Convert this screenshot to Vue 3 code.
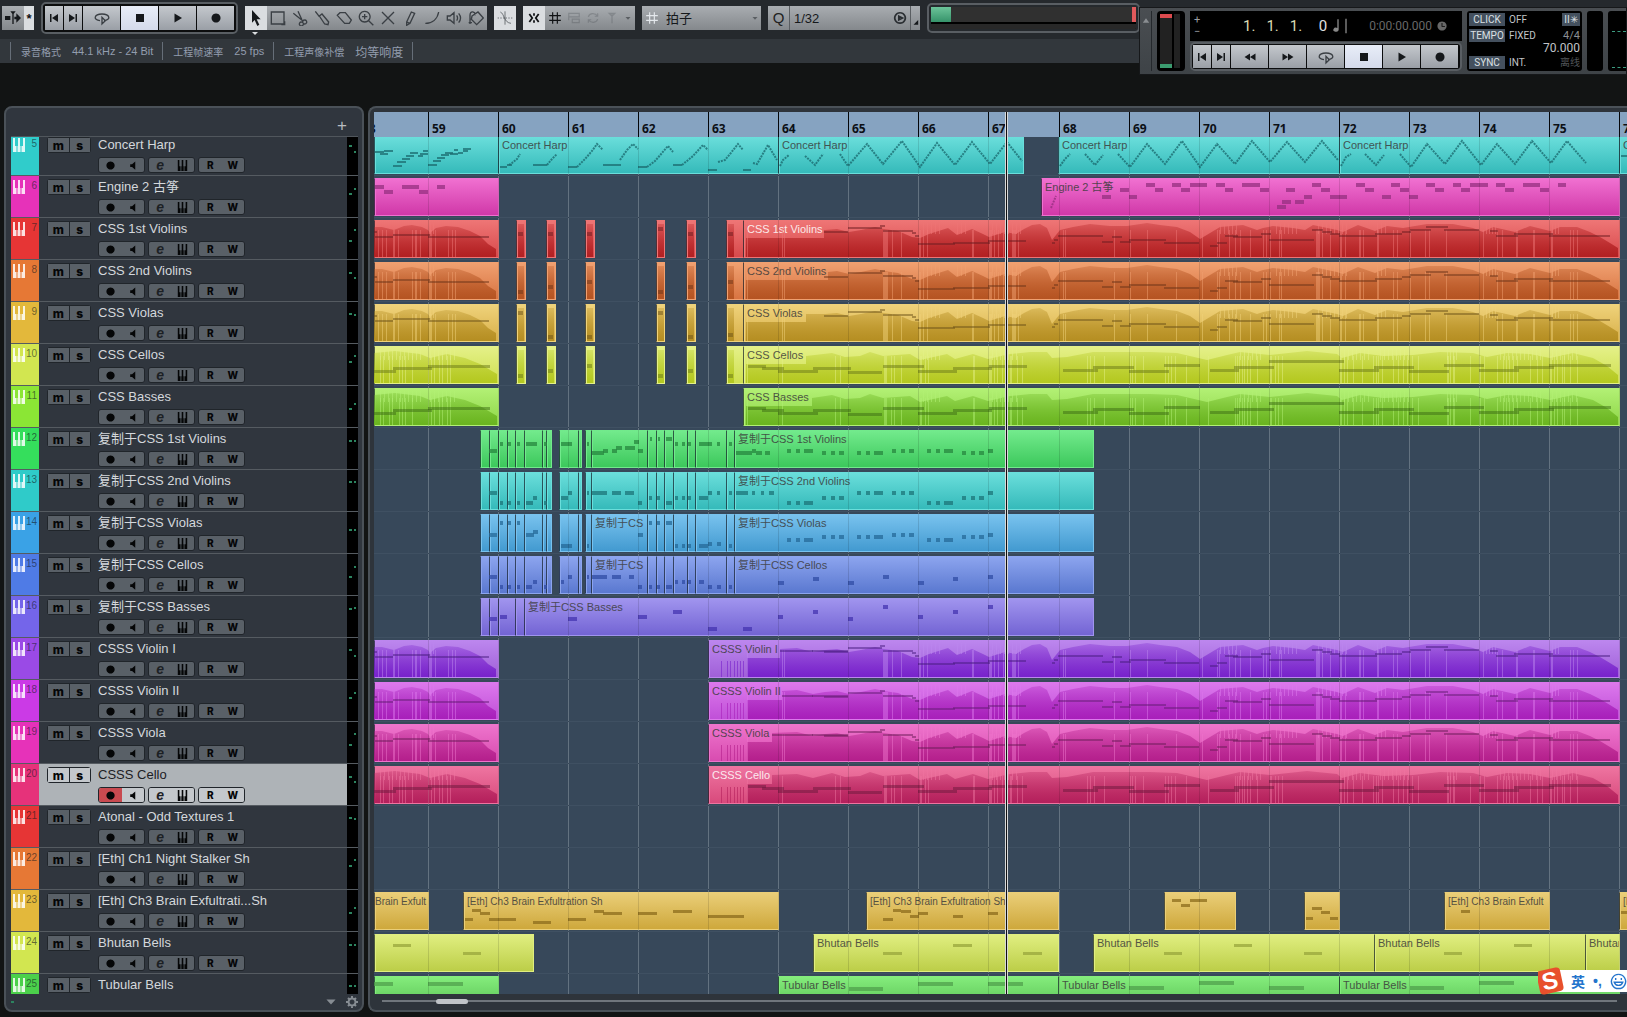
<template>
  <div class="daw">
    <header class="toolbar">
      <div class="group">
        <button class="btn w22" aria-label="Auto-scroll"><svg viewBox="0 0 24 24"><path d="M0 9h8v6H0zM11 3h2v18h-2zM14 10h3V5l7 7-7 7v-5h-3zM8 2h8l-4 5z" /></svg></button>
        <button class="btn w10 lit" aria-label="Suspend auto-scroll"><b>*</b></button>
      </div>
      <div class="transport small">
        <button v-for="t in mainTransport" :key="t" class="btn" :class="[t, { lit: t === 'stop' }]" :aria-label="t">
          <svg viewBox="0 0 24 24" :class="{ line: t === 'cycle' }"><path :d="icons[t]" /></svg>
        </button>
      </div>
      <div class="group tools">
        <button v-for="(t, i) in tools" :key="t" class="btn w22" :class="{ lit: i === 0 }" :aria-label="t">
          <svg viewBox="0 0 24 24" :class="{ line: i > 0 }"><path :d="icons[t]" /></svg>
        </button>
      </div>
      <div class="group">
        <button class="btn w22 lit" aria-label="Snap to zero crossing"><svg class="line thin" viewBox="0 0 24 24"><path d="M12 2v20M1 12h2M5 12h2M9 12h2M13 12h2M17 12h2M21 12h2M5 3c6 2 5 16 16 17" /></svg></button>
      </div>
      <div class="group snap">
        <button class="btn w22 lit" aria-label="Snap"><svg class="line bold" viewBox="0 0 24 24"><path d="M4 5l5 7-5 7M20 5l-5 7 5 7M12 4v4M12 16v4" /></svg></button>
        <button class="btn" aria-label="Grid"><svg class="line dark" viewBox="0 0 24 24"><path :d="icons.grid" /></svg></button>
        <button class="btn dim" aria-label="Events"><svg class="line" viewBox="0 0 24 24"><path d="M3 4h18v6H3zM9 14h12v6H9zM3 10v6" /></svg></button>
        <button class="btn dim" aria-label="Shuffle"><svg class="line" viewBox="0 0 24 24"><path d="M4 10c2-7 12-7 16-1M20 14c-2 7-12 7-16 1M20 4v5h-5M4 20v-5h5" /></svg></button>
        <button class="btn dim" aria-label="Cursor"><svg class="line" viewBox="0 0 24 24"><path d="M12 4v17M7 4h10l-5 5z" /></svg></button>
        <button class="btn w14" aria-label="Snap type"><svg viewBox="0 0 24 24"><path d="M2 8h20L12 19z" /></svg></button>
      </div>
      <label class="group field beat">
        <svg class="line white" viewBox="0 0 24 24"><path :d="icons.grid" /></svg>
        <select aria-label="网格类型"><option>拍子</option></select>
        <svg class="arrow" viewBox="0 0 24 24"><path d="M2 8h20L12 19z" /></svg>
      </label>
      <div class="group field quant">
        <span class="q">Q</span>
        <select aria-label="Quantize preset"><option>1/32</option></select>
        <svg class="line bold" viewBox="0 0 24 24"><path d="M12 3a9 9 0 1 0 .1 0M10 9l6 3-6 3z" /></svg>
        <button class="btn w10" aria-label="Quantize panel"><svg viewBox="0 0 10 24"><path d="M9 15v7H2z" /></svg></button>
      </div>
      <div class="load"><i class="ok"></i><i class="clip-led"></i></div>
    </header>

    <section class="infoline">
      <div><small>录音格式</small><span>44.1 kHz - 24 Bit</span></div>
      <div><small>工程帧速率</small><span>25 fps</span></div>
      <div><small>工程声像补偿</small><span class="cjk">均等响度</span></div>
    </section>

    <!-- floating transport panel -->
    <aside class="panel-transport">
      <div class="handle"><svg viewBox="0 0 24 24"><path d="M12 4l11 16H1z" /></svg></div>
      <div class="io"><i></i><i></i></div>
      <div class="center">
        <div class="time">
          <span class="pm"><i>+</i><i>−</i></span>
          <span class="pos"><em>1.</em><em>1.</em><em>1.</em><em class="tick">0</em></span>
          <svg class="note" viewBox="0 0 24 24"><path d="M8 2h2v16a4 3 0 1 1-2-3zM20 1h2v22h-2z" /></svg>
          <span class="clock">0:00:00.000</span>
          <svg class="watch" viewBox="0 0 24 24"><path fill-rule="evenodd" d="M12 1a11 11 0 1 0 .1 0zM11 5v9h8v-2h-6V5z" /></svg>
        </div>
        <div class="transport">
          <button v-for="t in panelTransport" :key="t" class="btn" :class="[t, { lit: t === 'stop' }]" :aria-label="t">
            <svg viewBox="0 0 24 24" :class="{ line: t === 'cycle' }"><path :d="icons[t]" /></svg>
          </button>
        </div>
      </div>
      <div class="status">
        <p><b>CLICK</b><span>OFF</span><b class="pre">II✳</b></p>
        <p class="tempo"><b>TEMPO</b><span>FIXED</span><em>4/4</em></p>
        <p class="bpm">70.000</p>
        <p><b>SYNC</b><span>INT.</span><small>离线</small></p>
      </div>
      <div class="slot"></div>
      <div class="slot last"><i></i><i></i></div>
    </aside>

    <main class="workspace">
      <section class="list">
        <div class="list-head"><button aria-label="Add track">+</button></div>
        <div class="rows">
          <article v-for="t in tracks" :key="t.id" class="row" :class="{ selected: t.id === 20 }" :style="{ '--c': t.color }">
            <div class="strip">
              <svg viewBox="0 0 12 14"><path :d="icons.keys" /></svg>
              <span>{{ t.id }}</span>
            </div>
            <div class="ms"><button>m</button><button>s</button></div>
            <div class="info">
              <h3>{{ t.name }}</h3>
              <div class="ctl">
                <div>
                  <button class="rec" aria-label="Record enable"><svg viewBox="0 0 24 24"><path :d="icons.record" /></svg></button>
                  <button aria-label="Monitor"><svg viewBox="0 0 24 24"><path d="M7 9h4l7-6v18l-7-6H7z" /></svg></button>
                </div>
                <div>
                  <button class="e" aria-label="Edit channel">e</button>
                  <button aria-label="Instrument"><svg viewBox="0 0 12 14"><path :d="icons.keys" /></svg></button>
                </div>
                <div><button>R</button><button>W</button></div>
              </div>
            </div>
            <div class="meter"><i :class="'m' + (t.id % 4)"></i><i :class="'m' + (t.id % 3)"></i></div>
          </article>
        </div>
        <div class="list-foot">
          <i></i>
          <svg viewBox="0 0 24 24"><path d="M1 6h22L12 18z" /></svg>
          <svg class="line gear" viewBox="0 0 24 24"><path d="M12 5a7 7 0 1 0 .1 0M12 0v5M12 19v5M0 12h5M19 12h5M4 4l3 3M17 17l3 3M4 20l3-3M17 7l3-3" /></svg>
        </div>
      </section>

      <section class="arrange">
        <div class="canvas">
          <div class="ruler">
            <span v-for="b in bars" :key="b" class="bar" :style="{ left: barX(b) + 'px' }">{{ b }}</span>
          </div>
          <div class="lanes">
            <i v-for="b in bars" :key="b" class="grid" :style="{ left: barX(b) + 'px' }"></i>
            <div
              v-for="t in tracks"
              :key="t.id"
              class="lane"
              :class="{ tight: t.id === 23 }"
              :style="{ '--hi': t.hi, '--lo': t.lo, '--note': t.note }"
            >
              <div
                v-for="(c, i) in t.clips"
                :key="i"
                class="clip"
                :style="{ left: c[0] - origin + 'px', width: c[1] - c[0] + 1 + 'px' }"
              >
                <span v-if="c[2]" :class="{ pale: t.id === 7 || t.id === 20, flush: c[3] }">{{ c[2] }}</span>
              </div>
              <svg v-if="t.notes" class="art" aria-hidden="true">
                <defs v-if="t.deep">
                  <linearGradient :id="'env' + t.id" x1="0" y1="0" x2="0" y2="1">
                    <stop offset="0" :stop-color="t.deep" stop-opacity=".3" />
                    <stop offset="1" :stop-color="t.deep" />
                  </linearGradient>
                </defs>
                <g :transform="`translate(${-origin} 0)`">
                  <polygon v-for="(p, i) in t.envelopes" :key="'p' + i" :points="p" :fill="`url(#env${t.id})`" />
                  <path v-if="t.comb" :d="t.comb" :stroke="t.hi" stroke-opacity=".55" />
                  <path v-if="t.stripes" :d="t.stripes" :stroke="t.hi" stroke-opacity=".5" />
                  <path v-if="t.attack" :d="t.attack" :stroke="t.deep" stroke-opacity=".6" />
                  <rect
                    v-for="(n, i) in t.notes"
                    :key="'n' + i"
                    :x="n[0]"
                    :y="n[2]"
                    :width="n[1] - n[0]"
                    :height="n[3] || t.thick"
                    :class="{ soft: t.deep }"
                  />
                  <polyline v-for="(l, i) in t.runs" :key="'l' + i" :points="l" />
                </g>
              </svg>
            </div>
            <i v-for="b in bars" :key="'o' + b" class="grid over" :style="{ left: barX(b) + 'px' }"></i>
          </div>
          <i class="playhead"></i>
        </div>
        <div class="hscroll"><i></i></div>
      </section>
    </main>

    <!-- input method bar -->
    <div class="ime">
      <b>S</b>
      <div><span>英</span><span>•,</span>
        <svg class="line" viewBox="0 0 24 24"><path d="M12 2a10 10 0 1 0 .1 0M8 7v3M16 7v3M6 13c2 6 10 6 12 0z" /></svg>
      </div>
    </div>
  </div>
</template>

<script setup>
const origin = 374
const bars = Array.from({ length: 19 }, (_, i) => i + 58)
const barX = (b) => Math.round(124 + (b - 60) * 70.07)

const mainTransport = ['prev', 'next', 'cycle', 'stop', 'play', 'record']
const panelTransport = ['prev', 'next', 'rewind', 'forward', 'cycle', 'stop', 'play', 'record']
const tools = ['select', 'range', 'split', 'glue', 'erase', 'zoom', 'mute', 'draw', 'line', 'listen', 'color']

const icons = {
  prev: 'M4 4h3v16H4zM20 4v16L8 12z',
  next: 'M17 4h3v16h-3zM4 4v16l12-8z',
  rewind: 'M12 5v14L1 12zM23 5v14l-11-7z',
  forward: 'M12 5v14l11-7zM1 5v14l11-7z',
  cycle: 'M9 16C-2 15 0 6 12 6s14 9 3 10M12 11v10l5-5z',
  stop: 'M4 4h16v16H4z',
  play: 'M5 3v18l15-9z',
  record: 'M12 3a9 9 0 1 0 .1 0z',
  select: 'M6 0v19l4-4 4 9 3-2-4-8h6z',
  range: 'M2 3h19v18H2zM22 17v5h-5',
  split: 'M2 5l14 11M9 2l6 13M19 15a3 3 0 1 0 .1 0M14 18a3 3 0 1 0 .1 0',
  glue: 'M2 2l6 8M8 9l4-3 10 12-1 4-5-1z',
  erase: 'M2 8l4-4h8l9 11-3 5h-7z',
  zoom: 'M10 2a8 8 0 1 0 .1 0M10 6v8M6 10h8M16 16l7 7',
  mute: 'M3 3l18 18M21 3L3 21',
  draw: 'M7 18L14 3l5 2-7 15-5 3zM7 18l5 2',
  line: 'M2 20C12 20 20 14 22 3',
  listen: 'M2 9v6h4l6 5V4L6 9zM16 8c2 3 2 5 0 8M19 5c4 5 4 9 0 14',
  color: 'M6 9l9-6 8 9-10 10-8-8zM3 21V8c0-8 8-6 8 0M1 19h5',
  grid: 'M8 2v20M16 2v20M2 8h20M2 16h20',
  keys: 'M0 0h2v8h1.5v6H0zM4.5 8H5V0h2v8h.5v6h-3zM10 0h2v14H8.5V8H10z'
}

/* Controller curves: "x:y" pairs inside the clip */
const parse = (s) => s.split(' ').map((p) => p.split(':').map(Number))
const tail = '825:10 837:9 849:12 861:10 875:7 884:9 898:11 912:17 920:18 929:14 948:8 957:15 972:9 983:14 989:17 1005:12 1016:14 1024:9 1032:5 1040:4 1047:8 1052:20 1060:10 1073:7 1090:4 1110:6 1127:6 1147:3 1160:5 1177:7 1190:12 1200:19 1210:13 1220:7 1243:5 1257:10 1263:8 1273:6 1293:8 1305:10 1313:5 1337:10 1343:12 1358:5 1375:11 1387:6 1403:8 1427:4 1453:4 1473:8 1483:12 1493:7 1515:12 1530:6 1550:11 1560:7 1577:7 1590:12 1600:17 1610:23 1618:28'
const lowTail = '832:7 845:11 860:10 870:6 883:10 910:8 920:14 947:8 955:13 973:8 988:13 1010:8 1030:6 1047:6 1052:12 1067:11 1093:6 1113:6 1150:6 1177:7 1207:14 1227:9 1240:6 1270:9 1307:5 1337:8 1342:12 1360:7 1383:10 1413:9 1440:6 1473:7 1487:11 1507:7 1530:8 1550:12 1573:7 1593:12 1607:20 1618:29'
const head = parse('374:7 382:7 394:10 404:6 412:5 422:7 428:10 430:13 436:8 446:6 458:7 470:11 480:16 488:24 496:29')
const lowHead = parse('374:7 395:5 420:8 430:12 447:8 465:12 480:18 497:28')

const closed = (pts) => {
  const all = [[pts[0][0], 37], ...pts, [pts[pts.length - 1][0], 37]]
  return all.map((p) => p.join(',')).join(' ')
}
const vlines = (xs, y1, y2) => xs.map((x) => `M${x + 0.5} ${y1}V${y2}`).join('')
const shift = (notes, dy) => notes.map(([a, b, y]) => [a, b, y + dy])

const highStripes = [378, 382, 386, 393, 394, 398, 412, 415, 416, 420, 429, 430, 431, 435, 448, 452, 455, 747, 782, 784, 883, 884, 885, 886, 887, 892, 901, 919, 920, 923, 927, 972, 973, 989, 990, 991, 994, 998, 1003, 1012, 1013, 1014, 1015, 1018, 1063, 1065, 1114, 1130, 1147, 1176, 1202, 1217, 1219, 1229, 1235, 1240, 1250, 1263, 1266, 1270, 1279, 1281, 1316, 1317, 1318, 1319, 1322, 1330, 1340, 1341, 1345, 1359, 1360, 1363, 1377, 1378, 1393, 1397, 1410, 1425, 1429, 1446, 1483, 1497, 1502, 1516, 1517, 1533, 1534, 1551, 1552, 1570, 1573, 1577]
const lowStripes = [380, 383, 389, 392, 399, 402, 405, 412, 428, 431, 434, 439, 442, 447, 450, 747, 782, 835, 840, 884, 885, 886, 891, 894, 901, 920, 921, 925, 928, 973, 974, 989, 990, 991, 994, 997, 1002, 1010, 1011, 1017, 1022, 1087, 1090, 1094, 1104, 1130, 1132, 1135, 1143, 1165, 1168, 1171, 1175, 1186, 1208, 1235, 1237, 1239, 1242, 1244, 1247, 1250, 1257, 1270, 1271, 1275, 1278, 1282, 1340, 1341, 1344, 1347, 1353, 1362, 1373, 1376, 1378, 1382, 1393, 1398, 1403, 1407, 1412, 1418, 1447, 1448, 1450, 1453, 1454, 1470, 1479, 1480, 1484, 1497, 1503, 1506, 1509, 1513, 1517, 1530, 1537, 1542, 1550, 1551, 1554, 1557, 1562, 1564, 1570, 1577]

const span = (a, b, step) => Array.from({ length: Math.floor((b - a) / step) }, (_, i) => a + i * step)
const highComb = [...span(430, 438, 3), ...span(923, 945, 4), ...span(957, 972, 4), ...span(992, 1026, 4), ...span(1220, 1240, 4), ...span(1276, 1300, 4), ...span(1318, 1352, 4), ...span(1377, 1390, 4), ...span(1486, 1500, 3), ...span(1552, 1562, 3)]
const lowComb = [...span(380, 425, 4), ...span(430, 460, 4), ...span(923, 945, 4), ...span(992, 1020, 4), ...span(1240, 1266, 4), ...span(1340, 1375, 4), ...span(1380, 1415, 4), ...span(1447, 1460, 3), ...span(1500, 1545, 4), ...span(1552, 1580, 4)]

const highNotes = [[374, 377, 11], [375, 393, 16], [393, 430, 14], [428, 489, 16], [824, 848, 11], [848, 882, 7], [880, 885, 5], [883, 913, 10], [912, 916, 12], [915, 919, 15], [918, 955, 23], [953, 990, 22], [988, 1026, 20], [1052, 1055, 22], [1054, 1058, 19], [1058, 1103, 15], [1102, 1113, 21], [1112, 1122, 16], [1120, 1131, 21], [1129, 1166, 19], [1164, 1199, 22], [1210, 1218, 25], [1217, 1227, 22], [1225, 1238, 15], [1233, 1262, 16], [1261, 1271, 13], [1269, 1314, 19], [1312, 1323, 9], [1322, 1332, 11], [1330, 1340, 13], [1339, 1377, 15], [1375, 1402, 13], [1402, 1411, 11], [1410, 1431, 9], [1426, 1448, 6], [1444, 1479, 9], [1490, 1498, 10], [1496, 1518, 15], [1514, 1553, 13], [1549, 1610, 15]]
const lowNotes = [[374, 396, 24], [393, 432, 21], [428, 490, 19], [748, 766, 19], [762, 784, 21], [778, 818, 24], [813, 851, 21], [848, 882, 25], [883, 924, 19], [918, 957, 24], [953, 992, 21], [989, 1027, 19], [1063, 1098, 23], [1093, 1134, 20], [1129, 1169, 24], [1164, 1200, 18], [1210, 1239, 23], [1234, 1274, 20], [1269, 1344, 14], [1339, 1379, 23], [1374, 1414, 20], [1409, 1449, 24], [1444, 1484, 18], [1479, 1519, 23], [1514, 1554, 20], [1549, 1611, 18]]

const stabX = [[516, 525], [546, 555], [585, 594], [656, 664], [686, 695], [726, 743]]
const stabNotes = (ys) => ys.map((y, i) => [stabX[i][0] + 2, stabX[i][0] + 7, y, 4])

function strings(label, from, { low = false, dy = 0, stabs = null, labelEnd }) {
  const body = parse(low ? lowTail : tail)
  const lead = from === 708
    ? [[747, 18], [labelEnd, 18], [labelEnd, 9], [797, 8], [813, 12]]
    : [[746, 18], [labelEnd, 18], [labelEnd, 10]]
  const pts = [...lead, ...body.filter((p) => p[0] > labelEnd)]
  const notes = shift(low ? lowNotes : highNotes, dy)
  const extra = from === 708 && !low ? shift([[labelEnd, 813, 10], [812, 848, 10]], dy) : []
  const envelopes = [closed(low ? lowHead : head), closed(pts)]
  if (stabs) {
    stabX.forEach(([a]) => envelopes.push(`${a + 2},37 ${a + 2},4 ${a + 8},4 ${a + 8},37`))
  }
  return {
    clips: [[374, 498], ...(stabs ? stabX : []), [from, 1619, label]],
    notes: [...notes, ...extra, ...(stabs ? stabNotes(stabs) : [])],
    thick: low ? 3 : 2,
    envelopes,
    stripes: vlines(low ? lowStripes : highStripes, 10, 37),
    comb: vlines(low ? lowComb : highComb, 3, 14),
    attack: from === 708 ? vlines([721, 727, 730, 734, 737, 740, 743], 21, 37) : ''
  }
}

const cuts = [498, 507, 515, 524, 542, 546, 551]
const cuts2 = [585, 591, 647, 656, 664, 673, 687, 695, 726, 734]
const pairs = (xs) => xs.slice(1).map((x, i) => [xs[i], x])

function copied(label, notes, cut) {
  const mid = pairs(cuts2)
  if (cut) mid[1] = [591, 647, '复制于CS']
  return {
    clips: [[480, 489], [489, 498], ...pairs(cuts), [559, 578], [578, 581], ...mid, [734, 1093, label]],
    notes,
    thick: 4
  }
}
// staccato phrase in half bars, one pitch for each
const phrase = (ys) => {
  const out = ys.flatMap((y, i) => {
    const x = 787 + i * 35
    return [[x, x + 4, y], [x + 9, x + 13, y], [x + 17, x + (i % 2 ? 22 : 26), y]]
  })
  return [...out, [988, 993, 19]]
}
const at = (xs, y) => xs.map((x) => [x, x + 3, y])

const green = [[489, 497, 19], ...at([500, 508, 517, 544], 12), [526, 537, 12], [561, 572, 12], [587, 589, 12], [592, 604, 21], [603, 608, 19], [612, 617, 19], [616, 622, 16], [625, 635, 16], [634, 639, 10], [638, 643, 19], [650, 652, 7], [658, 660, 7], [666, 672, 7], ...at([675, 682, 688, 717, 729], 12), [699, 712, 12], [736, 752, 21], [752, 756, 19], [756, 762, 21], [765, 770, 21], ...phrase([19, 21, 21, 19, 19, 21])]
const teal = [[489, 497, 19], ...at([500, 508, 517, 544], 29), [526, 533, 29], [533, 537, 24], [561, 568, 24], [568, 572, 19], [587, 589, 19], [592, 607, 19], [612, 621, 19], [625, 634, 19], [638, 642, 29], ...at([649, 657, 675, 682, 688], 24), [666, 672, 29], [699, 708, 24], [708, 712, 19], ...at([717, 729, 752, 761], 19), [736, 748, 19], [769, 774, 19], ...phrase([29, 24, 19, 19, 29, 24])]
const blue = [[489, 497, 19], ...at([500, 508, 517, 649, 657], 7), [526, 534, 19], [533, 538, 16], [561, 572, 30], [587, 589, 30], [638, 643, 19], [666, 672, 7], ...at([675, 682, 688, 729], 30), [699, 708, 30], [708, 712, 28], [717, 721, 28], ...phrase([24, 21, 21, 19, 24, 21])]
const indigo = [[489, 497, 19], ...at([500, 508, 517, 544, 649, 657, 729], 29), [526, 532, 29], [533, 537, 24], [561, 564, 24], [568, 572, 19], [587, 589, 19], [592, 607, 19], [612, 621, 19], [629, 634, 19], [638, 642, 29], [666, 672, 29], ...at([675, 682, 688], 24), [699, 704, 24], [708, 712, 29], [717, 721, 29], [778, 784, 25], [813, 819, 21], [848, 854, 25], [883, 889, 19], [918, 924, 25], [953, 958, 21], [988, 993, 19]]
const violet = [[489, 497, 19], [500, 507, 17], [568, 577, 19], [638, 647, 17], [673, 682, 12], [708, 717, 29], [743, 752, 29], [778, 783, 17], [813, 818, 12], [848, 853, 19], [883, 888, 7], [918, 923, 17], [953, 958, 12], [988, 993, 7]]

const harpNotes = [[375, 384, 15], [380, 388, 17], [384, 393, 14], [393, 402, 29], [397, 406, 25], [402, 410, 22], [406, 414, 19], [410, 418, 16], [418, 423, 19], [420, 428, 17], [423, 428, 14], [428, 437, 28], [433, 441, 24], [437, 445, 21], [441, 449, 18], [445, 453, 16], [450, 458, 17], [454, 458, 13], [458, 463, 16], [463, 471, 12], [463, 468, 14], [500, 507, 30], [507, 512, 28], [533, 547, 28], [568, 577, 30], [612, 621, 28], [603, 612, 28], [638, 647, 30], [673, 682, 28], [708, 717, 33], [743, 751, 33], [1621, 1627, 19]]
const harpRuns = [
  '509,29 512,27 517,23 520,18', '547,29 552,23 557,18',
  '577,31 585,23 592,15 597,8 603,14', '620,24 627,14 633,8 638,13',
  '647,31 655,25 662,17 668,10 673,16', '682,29 693,20 703,9 708,14',
  '718,26 725,24 730,18 738,8 743,14', '753,27 757,28 768,9 777,24',
  '780,30 783,24 789,19', '805,20 815,29 823,18',
  '840,18 848,30 867,8 883,28 902,5 920,31 937,7 955,29 972,6 990,28 1007,6 1022,25',
  '1060,30 1065,23 1070,18', '1085,18 1095,29 1103,19',
  '1118,18 1130,31 1147,8 1165,28 1182,5 1200,31 1217,8 1235,28 1252,5 1270,26 1287,6 1305,26 1322,5 1338,24',
  '1341,30 1346,21 1351,18', '1365,18 1376,29 1384,19',
  '1400,18 1411,31 1427,8 1445,28 1462,5 1481,29 1497,8 1515,28 1532,5 1551,27 1567,5 1586,27'
]
const zheng = [[375, 384, 7], [384, 393, 12], [402, 419, 7], [419, 428, 12], [437, 445, 7], [1102, 1111, 17], [1120, 1129, 10], [1129, 1137, 17], [1146, 1155, 5], [1155, 1163, 10], [1172, 1181, 5], [1181, 1190, 10], [1190, 1207, 5], [1216, 1225, 5], [1225, 1233, 10], [1242, 1260, 5], [1260, 1269, 10], [1286, 1295, 10], [1277, 1286, 27], [1282, 1291, 22], [1295, 1304, 22], [1304, 1312, 17], [1312, 1321, 5], [1321, 1330, 10], [1330, 1347, 17], [1356, 1365, 5], [1365, 1374, 10], [1382, 1391, 17], [1391, 1400, 5], [1400, 1409, 10], [1409, 1418, 17], [1426, 1435, 5], [1435, 1444, 10], [1453, 1461, 5], [1461, 1470, 10], [1470, 1488, 5], [1496, 1505, 5], [1505, 1514, 10], [1523, 1540, 5], [1540, 1549, 10], [1558, 1566, 5]]
const brain = [[465, 473, 26], [472, 481, 17], [480, 490, 20], [489, 516, 26], [533, 551, 29], [568, 586, 26], [594, 604, 18], [603, 622, 20], [638, 657, 20], [673, 692, 18], [708, 744, 23], [883, 893, 26], [893, 901, 17], [901, 911, 18], [910, 919, 23], [918, 928, 20], [953, 963, 23], [988, 998, 20], [1172, 1181, 7], [1181, 1190, 12], [1190, 1207, 7], [1306, 1313, 25], [1312, 1322, 15], [1321, 1330, 19], [1330, 1338, 25], [1461, 1470, 18], [1621, 1627, 19]]
const bhutan = [[393, 411, 10], [463, 481, 18], [883, 902, 18], [953, 972, 10], [1023, 1042, 18], [1164, 1182, 18], [1234, 1252, 10], [1304, 1322, 18], [1444, 1462, 18], [1514, 1532, 10]]
const tubular = [[374, 393, 6], [428, 463, 6], [849, 883, 11], [918, 953, 6], [988, 1023, 6], [1129, 1164, 10], [1199, 1234, 5], [1269, 1304, 10], [1410, 1444, 10], [1479, 1514, 5]]

const sh = '[Eth] Ch3 Brain Exfultration Sh'
const tracks = [
  { id: 5, name: 'Concert Harp', color: '#30cccb', hi: '#6adedb', lo: '#35baba', note: '#1c6c70', clips: [[374, 498], [498, 778, 'Concert Harp'], [778, 1023, 'Concert Harp'], [1058, 1339, 'Concert Harp'], [1339, 1619, 'Concert Harp'], [1619, 1700, 'Concert Harp']], notes: harpNotes, thick: 2, runs: harpRuns },
  { id: 6, name: 'Engine 2 古筝', color: '#e632b9', hi: '#f070d0', lo: '#d038a8', note: '#963080', clips: [[374, 498], [1041, 1619, 'Engine 2 古筝']], notes: zheng, thick: 4, runs: ['1051,30 1056,18'] },
  { id: 7, name: 'CSS 1st Violins', color: '#e63535', hi: '#ee7575', lo: '#d84a4c', deep: '#b22022', note: '#6c1c20', ...strings('CSS 1st Violins', 743, { labelEnd: 824, stabs: [12, 12, 12, 7, 12, 12] }) },
  { id: 8, name: 'CSS 2nd Violins', color: '#e67835', hi: '#f0a070', lo: '#d87442', deep: '#b55422', note: '#6c3418', ...strings('CSS 2nd Violins', 743, { labelEnd: 828, dy: 3, stabs: [28, 23, 18, 28, 23, 18] }) },
  { id: 9, name: 'CSS Violas', color: '#e3b83b', hi: '#efd27a', lo: '#d8b04a', deep: '#b58e22', note: '#6c5218', ...strings('CSS Violas', 743, { labelEnd: 806, stabs: [7, 31, 31, 7, 31, 29] }) },
  { id: 10, name: 'CSS Cellos', color: '#d2e650', hi: '#e4f088', lo: '#cfe050', deep: '#b4c820', note: '#6a7818', ...strings('CSS Cellos', 743, { labelEnd: 806, low: true, stabs: [28, 23, 18, 28, 23, 28] }) },
  { id: 11, name: 'CSS Basses', color: '#8be635', hi: '#b2f074', lo: '#8ed648', deep: '#6ab420', note: '#3c6c14', ...strings('CSS Basses', 743, { labelEnd: 812, low: true }) },
  { id: 12, name: '复制于CSS 1st Violins', color: '#35de5c', hi: '#72ea8c', lo: '#3cc85c', note: '#27873f', ...copied('复制于CSS 1st Violins', green) },
  { id: 13, name: '复制于CSS 2nd Violins', color: '#2fcbc9', hi: '#6adedb', lo: '#35baba', note: '#1c7478', ...copied('复制于CSS 2nd Violins', teal) },
  { id: 14, name: '复制于CSS Violas', color: '#3aa2e6', hi: '#78c2ee', lo: '#429ad0', note: '#256a98', ...copied('复制于CSS Violas', blue, true) },
  { id: 15, name: '复制于CSS Cellos', color: '#4f7be6', hi: '#8ca4ee', lo: '#5a78d0', note: '#304ca4', ...copied('复制于CSS Cellos', indigo, true) },
  { id: 16, name: '复制于CSS Basses', color: '#7465ea', hi: '#a094ee', lo: '#7364d4', note: '#4434b0', clips: [[480, 489], [489, 498], [498, 515], [515, 524], [524, 1093, '复制于CSS Basses']], notes: violet, thick: 4 },
  { id: 17, name: 'CSSS Violin I', color: '#9a4ae6', hi: '#bc86ee', lo: '#a060d8', deep: '#7822cc', note: '#481c80', ...strings('CSSS Violin I', 708, { labelEnd: 780 }) },
  { id: 18, name: 'CSSS Violin II', color: '#cb3ae6', hi: '#dc78ec', lo: '#c050d8', deep: '#a81fba', note: '#641c74', ...strings('CSSS Violin II', 708, { labelEnd: 782, dy: 3 }) },
  { id: 19, name: 'CSSS Viola', color: '#e632b9', hi: '#ee74cc', lo: '#d84cb0', deep: '#b41f8c', note: '#6c1c58', ...strings('CSSS Viola', 708, { labelEnd: 772 }) },
  { id: 20, name: 'CSSS Cello', color: '#e6327a', hi: '#ee74a0', lo: '#d84a7c', deep: '#b4205c', note: '#6c183c', ...strings('CSSS Cello', 708, { labelEnd: 772, low: true }) },
  { id: 21, name: 'Atonal - Odd Textures 1', color: '#e63535' },
  { id: 22, name: '[Eth] Ch1 Night Stalker Sh', color: '#e67835' },
  { id: 23, name: '[Eth] Ch3 Brain Exfultrati...Sh', color: '#e3b83b', hi: '#eace78', lo: '#cea83c', note: '#8c6c1c', clips: [[374, 428, 'Brain Exfult', true], [463, 778, sh], [866, 1058, sh], [1164, 1235], [1304, 1339], [1444, 1549, '[Eth] Ch3 Brain Exfult'], [1619, 1700, sh]], notes: brain, thick: 3 },
  { id: 24, name: 'Bhutan Bells', color: '#d2e650', hi: '#e0ee80', lo: '#bcce48', note: '#98a63c', clips: [[374, 533], [813, 1058, 'Bhutan Bells'], [1093, 1374, 'Bhutan Bells'], [1374, 1585, 'Bhutan Bells'], [1585, 1619, 'Bhutan Bells']], notes: bhutan, thick: 3 },
  { id: 25, name: 'Tubular Bells', color: '#4bd04b', hi: '#84ec7c', lo: '#56be50', note: '#50a04c', clips: [[374, 498], [778, 1058, 'Tubular Bells'], [1058, 1339, 'Tubular Bells'], [1339, 1619, 'Tubular Bells']], notes: tubular, thick: 4 }
]
</script>

<style>
body {
  background: #121414;
}
</style>

<style scoped>
* {
  box-sizing: border-box;
}

.daw {
  position: relative;
  display: flex;
  flex-direction: column;
  height: 100vh;
  overflow: hidden;
  background: #121414;
  color: #d0d4d8;
  font-family: 'Liberation Sans', 'Noto Sans CJK SC', sans-serif;
  font-size: 13px;
}

button {
  padding: 0;
  border: 0;
  font: inherit;
  color: inherit;
  background: none;
}

svg {
  fill: #15181b;
  stroke: none;
}

svg.line {
  fill: none;
  stroke: #3a3f44;
  stroke-width: 2;
}

svg.bold {
  stroke: #101214;
  stroke-width: 3;
}

svg.dark {
  stroke: #101214;
}

svg.thin {
  stroke-width: 1;
}

svg.white {
  stroke: #e4e8ec;
}

/* toolbar */
.toolbar {
  display: flex;
  flex: none;
  align-items: center;
  gap: 7px;
  height: 39px;
  padding: 0 0 3px 2px;
  background: #25292d;
}

.group {
  display: flex;
  flex: none;
  align-items: center;
  height: 24px;
  background: linear-gradient(#a9adb1, #84888c);
}

.btn {
  display: flex;
  align-items: center;
  justify-content: center;
  width: 19px;
  height: 24px;
}

.btn svg {
  width: 16px;
  height: 16px;
}

.w22 {
  width: 22px;
}

.w10 {
  width: 10px;
}

.w14 {
  width: 14px;
}

.w14 svg,
.arrow {
  width: 6px;
  height: 6px;
  fill: #5a5e62;
}

.lit {
  background: #dadde0;
  color: #111;
}

.dim {
  opacity: 0.25;
}

.transport {
  display: flex;
  flex: none;
  gap: 1px;
  padding: 2px;
  border: 2px solid #595e63;
  border-radius: 5px;
  background: #0c0d0e;
}

.transport .btn {
  width: 38px;
  background: linear-gradient(#c4c8cd, #9a9fa6);
}

.transport .prev,
.transport .next {
  width: 19px;
}

.transport .lit {
  background: linear-gradient(#e8edf8, #d4daea);
}

.transport .btn svg {
  width: 12px;
  height: 12px;
}

.transport .cycle svg {
  width: 18px;
  height: 16px;
}

.small .btn {
  width: 37px;
}

.small .prev,
.small .next {
  width: 18px;
}

.tools::after {
  position: absolute;
  top: 32px;
  left: 252px;
  border: 3px solid transparent;
  border-top-color: #dadde0;
  content: '';
}

.snap .btn:not(.w22, .w14) {
  width: 19px;
}

.snap svg {
  width: 14px;
  height: 14px;
}

.snap .w14 svg {
  width: 6px;
  height: 6px;
}

.field select {
  flex: 1;
  min-width: 0;
  height: 24px;
  padding: 0 4px;
  border: 0;
  background: none;
  appearance: none;
  font: inherit;
  color: #15181b;
}

.field > svg {
  width: 14px;
  height: 14px;
  margin: 0 3px;
}

.field > .arrow {
  width: 6px;
  height: 6px;
}

.field > .bold {
  stroke: #2a2e32;
}

.beat {
  width: 119px;
}

.quant {
  width: 152px;
}

.q {
  width: 22px;
  font-size: 15px;
  text-align: center;
  line-height: 24px;
  color: #222;
  border-right: 1px solid #5a5e62;
}

.quant .btn {
  border-left: 1px solid #5a5e62;
}

.load {
  display: flex;
  justify-content: space-between;
  width: 213px;
  height: 30px;
  padding: 2px;
  border: 2px solid #595e63;
  border-radius: 5px;
  background: linear-gradient(#303030 15px, #000 15px, #000 17px, #282828 17px) content-box #000;
}

.load i {
  height: 15px;
}

.ok {
  width: 20px;
  background: linear-gradient(#6cc49a, #36936a);
}

.clip-led {
  width: 4px;
  background: #e05a5c;
}

/* info line */
.infoline {
  display: flex;
  flex: none;
  align-items: center;
  height: 24px;
  padding-left: 10px;
  background: #32373c;
  color: #929dae;
  font-size: 11px;
}

.infoline div {
  display: flex;
  align-items: center;
  gap: 11px;
  height: 18px;
  padding: 0 9px 0 10px;
  border-left: 1px solid #666e78;
}

.infoline div:last-child {
  border-right: 1px solid #666e78;
}

.infoline small {
  font-size: 10px;
}

.cjk {
  font-size: 12px;
}

/* transport panel */
.panel-transport {
  position: absolute;
  top: 7px;
  right: 0;
  display: flex;
  gap: 5px;
  width: 488px;
  height: 68px;
  padding: 3px 0;
  overflow: hidden;
  border: 1px solid #16181a;
  background: linear-gradient(#4a4e52, #3e4347);
}

.handle {
  flex: none;
  width: 12px;
  padding: 1px 2px;
  border-right: 1px solid #24282c;
}

.handle svg {
  width: 8px;
  height: 7px;
  fill: #8a8e92;
}

.io {
  display: flex;
  flex: none;
  gap: 2px;
  width: 28px;
  padding: 3px;
  border-radius: 4px;
  background: #000;
}

.io i:first-child {
  width: 12px;
  background: linear-gradient(#dc4a4e 4px, #222 4px, #222 50px, #3c9c70 50px);
}

.io i:last-child {
  width: 6px;
  background: #222;
}

.center {
  display: flex;
  flex: none;
  flex-direction: column;
  gap: 1px;
  width: 272px;
}

.time {
  display: flex;
  flex: 1;
  align-items: center;
  padding: 0 4px;
  background: #000;
  font-family: Roboto, sans-serif;
}

.pm {
  display: flex;
  flex-direction: column;
  width: 49px;
  color: #9a9ea2;
  font-size: 11px;
  line-height: 12px;
}

.pm i {
  font-style: normal;
}

.pos {
  display: flex;
  gap: 11px;
  color: #dcdcb4;
  font-size: 15px;
}

.pos em {
  font-style: normal;
}

.pos .tick {
  width: 14px;
  color: #e0e0e0;
  text-align: right;
}

.note {
  width: 18px;
  height: 16px;
  margin: 0 20px 0 4px;
  fill: #888;
}

.clock {
  color: #686868;
  font-size: 12px;
}

.watch {
  width: 10px;
  height: 10px;
  margin-left: 5px;
  fill: #686868;
}

.center .transport {
  padding: 1px;
}

.center .transport .btn {
  width: 37px;
  height: 23px;
}

.center .transport .prev,
.center .transport .next {
  width: 18px;
}

.status {
  display: flex;
  flex: none;
  flex-direction: column;
  width: 115px;
  padding: 2px;
  border-radius: 3px;
  background: #000;
  color: #c0c4c8;
  font-family: Roboto, 'Noto Sans CJK SC', sans-serif;
  font-size: 10px;
}

.status p {
  display: flex;
  flex: none;
  height: 16px;
  margin: 0;
  line-height: 13px;
}

.status .tempo {
  height: 13px;
}

.status b {
  width: 36px;
  height: 13px;
  background: #44505e;
  color: #dce0e4;
  font-weight: 400;
  text-align: center;
}

.status span {
  flex: 1;
  padding-left: 4px;
}

.status .pre {
  width: 18px;
}

.status em {
  color: #8a8e92;
  font-size: 11px;
  font-style: normal;
}

.status small {
  color: #505458;
  font-size: 10px;
}

.status .bpm {
  justify-content: flex-end;
  height: 14px;
  font-size: 12px;
}

.slot {
  flex: none;
  width: 16px;
  border-radius: 3px;
  background: #000;
}

.slot.last {
  width: 30px;
  padding: 20px 4px;
}

.slot.last i {
  display: block;
  width: 14px;
  height: 36px;
  border-top: 1px dashed #3c9c80;
}

/* workspace */
.workspace {
  display: flex;
  flex: 1;
  gap: 4px;
  min-height: 0;
  padding: 43px 0 5px 4px;
}

.list {
  display: flex;
  flex: none;
  flex-direction: column;
  width: 360px;
  padding: 0 4px 0 5px;
  border: 2px solid #4a5158;
  border-radius: 8px;
  background: #30363e;
}

.list-head {
  flex: none;
  height: 28px;
  padding: 9px 11px 0;
  text-align: right;
  color: #b8bcc0;
  font-size: 17px;
  line-height: 17px;
}

.rows {
  flex: 1;
  min-height: 0;
  overflow: hidden;
  border-top: 1px solid #50565c;
}

.row {
  display: flex;
  height: 42px;
  border-bottom: 1px solid #555b61;
}

.row:first-child,
.lane:first-of-type {
  margin-top: -3px;
}

.strip {
  display: flex;
  justify-content: space-between;
  width: 28px;
  padding: 4px 2px;
  background: var(--c);
  color: rgba(20, 25, 30, 0.6);
  font-size: 10px;
}

.strip svg {
  width: 12px;
  height: 14px;
  fill: rgba(255, 255, 255, 0.85);
}

.ms {
  display: flex;
  gap: 1px;
  width: 44px;
  height: 16px;
  margin: 3px 7px 0 8px;
  border: 1px solid #20252a;
  border-radius: 3px;
  background: #20252a;
}

.ms button,
.ctl button {
  flex: 1;
  background: #596067;
  color: #050607;
  font-family: Inter, sans-serif;
  font-size: 12px;
  font-weight: 800;
  line-height: 13px;
}

.info {
  flex: 1;
  min-width: 0;
}

.info h3 {
  height: 23px;
  margin: 0;
  font-size: 13px;
  font-weight: 400;
  line-height: 22px;
  white-space: nowrap;
  color: #d4d8dc;
}

.ctl {
  display: flex;
  gap: 3px;
}

.ctl div {
  display: flex;
  width: 47px;
  height: 16px;
  overflow: hidden;
  border: 1px solid #20252a;
  border-radius: 3px;
}

.ctl button {
  display: flex;
  align-items: center;
  justify-content: center;
  font-size: 10px;
}

.ctl .e {
  color: #1c2024;
  font-family: 'Liberation Sans', sans-serif;
  font-size: 14px;
  font-style: italic;
  font-weight: 700;
}

.ctl svg {
  width: 11px;
  height: 11px;
  fill: #050607;
}

.selected {
  background: linear-gradient(90deg, #aeb3b7 336px, #000 336px);
}

.selected h3 {
  color: #1c2024;
}

.selected .ms button,
.selected .ctl button {
  background: #c4c8cc;
}

.selected .ctl .rec {
  background: #c84a50;
}

.meter {
  display: flex;
  gap: 2px;
  width: 11px;
  padding: 0 2px;
  background: #000;
}

.meter i {
  width: 3px;
  height: 2px;
  margin-top: 12px;
  background: #2c8460;
}

.meter .m1 {
  margin-top: 11px;
}

.meter .m2 {
  margin-top: 17px;
}

.meter .m3 {
  margin-top: 22px;
}

.list-foot {
  display: flex;
  flex: none;
  align-items: center;
  gap: 10px;
  height: 16px;
}

.list-foot i {
  width: 3px;
  height: 2px;
  margin-right: auto;
  background: #2c8460;
}

.list-foot svg {
  width: 10px;
  height: 10px;
  fill: #868c92;
}

.list-foot svg.gear {
  width: 12px;
  height: 12px;
  fill: none;
  stroke: #868c92;
  stroke-width: 4;
}

/* arrange view */
.arrange {
  display: flex;
  flex: 1;
  flex-direction: column;
  min-width: 0;
  padding: 4px 0 0 4px;
  border: 2px solid #4a5158;
  border-right: 0;
  border-radius: 8px 0 0 8px;
  background: #2e343b;
}

.canvas {
  position: relative;
  display: flex;
  flex: 1;
  flex-direction: column;
  min-height: 0;
  overflow: hidden;
}

.ruler {
  position: relative;
  flex: none;
  height: 25px;
  background: #86a3c1;
}

.bar {
  position: absolute;
  top: 0;
  height: 25px;
  padding: 8px 0 0 3px;
  border-left: 1px solid #05070a;
  color: #0c1016;
  font-family: 'Noto Sans', sans-serif;
  font-size: 12px;
  font-weight: 700;
  line-height: 18px;
}

.lanes {
  position: relative;
  flex: 1;
  min-height: 0;
  overflow: hidden;
  background: #37485a;
}

.lane {
  position: relative;
  height: 42px;
  border-bottom: 1px solid #3f5062;
}

.grid {
  position: absolute;
  top: 0;
  bottom: 0;
  width: 1px;
  background: #718292;
}

.grid.over {
  background: rgba(0, 0, 0, 0.12);
}

/* dark left edge with a light line inside, so that joined clips stay apart */
.clip {
  position: absolute;
  top: 2px;
  height: 38px;
  overflow: hidden;
  border: 1px solid var(--hi);
  border-left-color: rgba(20, 30, 40, 0.7);
  background: linear-gradient(var(--hi), var(--lo));
  box-shadow: inset 1px 0 var(--hi);
  color: #3c3c3c;
  font-size: 11px;
  line-height: 17px;
  white-space: nowrap;
}

.clip span {
  padding-left: 3px;
  opacity: 0.85;
}

.tight .clip {
  font-size: 10px;
}

.clip .flush {
  padding-left: 0;
}

.clip .pale {
  color: #fff;
}

.art {
  position: absolute;
  top: 2px;
  left: 0;
  width: 100%;
  height: 38px;
  pointer-events: none;
}

.art rect {
  fill: var(--note);
  opacity: 0.75;
}

.art rect.soft {
  opacity: 0.5;
}

.art polyline {
  fill: none;
  stroke: var(--note);
  stroke-width: 2;
  stroke-dasharray: 2 1;
  opacity: 0.8;
}

.playhead {
  position: absolute;
  top: 0;
  bottom: 0;
  left: 631px;
  width: 3px;
  border: solid #d8d8d8;
  border-width: 0 1px;
  background: #111;
}

.hscroll {
  flex: none;
  height: 16px;
  padding: 5px 10px 0 8px;
}

.hscroll::before {
  display: block;
  height: 2px;
  margin-top: 1px;
  background: #70767c;
  content: '';
}

.hscroll i {
  display: block;
  width: 32px;
  height: 5px;
  margin: -3px 0 0 54px;
  border-radius: 3px;
  background: #c0c4c8;
}

/* input method bar */
.ime {
  position: absolute;
  right: 0;
  bottom: 22px;
  display: flex;
  align-items: center;
  width: 89px;
  height: 28px;
  overflow: hidden;
}

.ime b {
  z-index: 1;
  flex: none;
  width: 24px;
  height: 24px;
  border-radius: 4px;
  background: #e8502c;
  color: #fff;
  font-size: 24px;
  line-height: 24px;
  text-align: center;
  transform: rotate(-12deg);
}

.ime div {
  display: flex;
  flex: none;
  align-items: center;
  gap: 8px;
  height: 22px;
  margin-left: -6px;
  padding-left: 15px;
  background: #fff;
  color: #2474cc;
  font-size: 14px;
  font-weight: 700;
}

.ime svg {
  flex: none;
  width: 17px;
  height: 17px;
  stroke: #2474cc;
}
</style>
